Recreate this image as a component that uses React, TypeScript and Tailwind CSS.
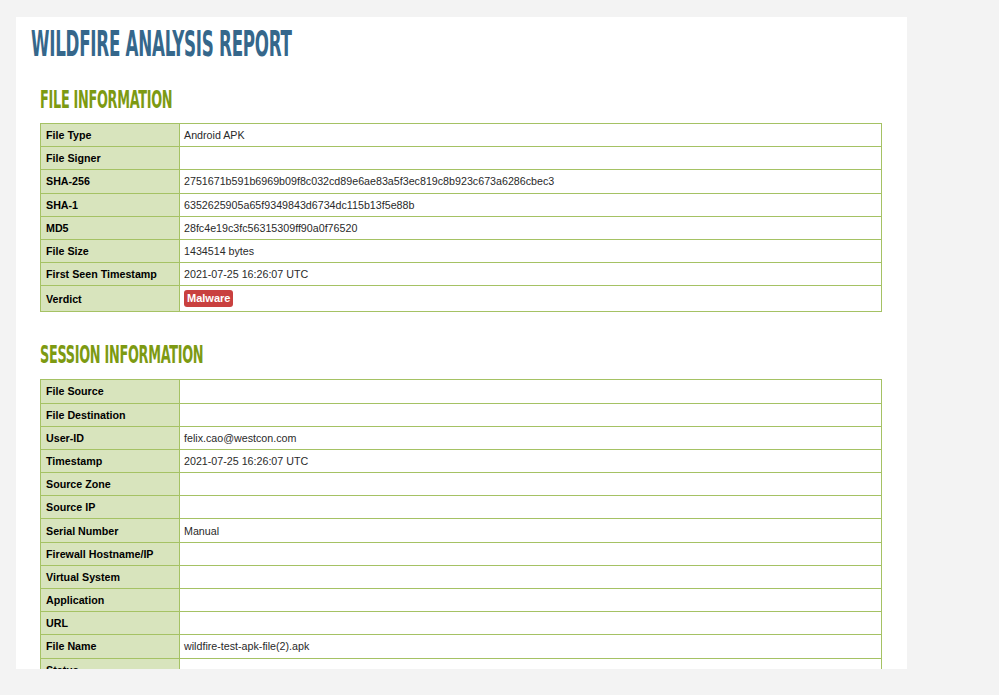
import React from 'react';

const FILE_INFO: [string, React.ReactNode][] = [
  ['File Type', 'Android APK'],
  ['File Signer', ''],
  ['SHA-256', '2751671b591b6969b09f8c032cd89e6ae83a5f3ec819c8b923c673a6286cbec3'],
  ['SHA-1', '6352625905a65f9349843d6734dc115b13f5e88b'],
  ['MD5', '28fc4e19c3fc56315309ff90a0f76520'],
  ['File Size', '1434514 bytes'],
  ['First Seen Timestamp', '2021-07-25 16:26:07 UTC'],
  [
    'Verdict',
    <span className="inline-block rounded-[3px] bg-[#c9403f] px-[3px] align-middle text-[11px] font-bold leading-[17px] text-white">Malware</span>,
  ],
];

const SESSION_INFO: [string, string][] = [
  ['File Source', ''],
  ['File Destination', ''],
  ['User-ID', 'felix.cao@westcon.com'],
  ['Timestamp', '2021-07-25 16:26:07 UTC'],
  ['Source Zone', ''],
  ['Source IP', ''],
  ['Serial Number', 'Manual'],
  ['Firewall Hostname/IP', ''],
  ['Virtual System', ''],
  ['Application', ''],
  ['URL', ''],
  ['File Name', 'wildfire-test-apk-file(2).apk'],
  ['Status', ''],
  ['Protocol', ''],
];

function InfoTable({ rows }: { rows: [string, React.ReactNode][] }) {
  return (
    <table className="w-[842px] border-collapse font-['Liberation_Sans',Arial,sans-serif] text-[10.7px] leading-[14px] text-[#2a2a2a]">
      <tbody>
        {rows.map(([k, v]) => (
          <tr key={k} className={k === 'Verdict' ? 'h-[26px]' : 'h-[23.2px]'}>
            <td className="w-[139px] border border-[#a5c264] bg-[#d8e4bd] px-[5px] py-0 font-bold text-black">{k}</td>
            <td className="border border-[#a5c264] bg-white px-[4px] py-0">{v}</td>
          </tr>
        ))}
      </tbody>
    </table>
  );
}

function Heading({ children, className }: { children: React.ReactNode; className: string }) {
  return (
    <h2
      className={`origin-left whitespace-nowrap font-['DejaVu_Sans_Condensed','DejaVu_Sans',sans-serif] font-bold uppercase leading-none tracking-[-0.5px] ${className}`}
    >
      {children}
    </h2>
  );
}

export default function App() {
  return (
    <div className="h-[695px] w-[999px] overflow-hidden bg-[#f3f3f3] pt-[17px] pl-4">
      <div className="h-[652px] w-[891px] overflow-hidden bg-white">
        <div className="pl-[15px] pt-[9px]">
          <Heading className="scale-x-[0.516] text-[36px] text-[#35678b]">Wildfire Analysis Report</Heading>
        </div>
        <div className="pl-[24px]">
          <Heading className="mt-[25px] scale-x-[0.571] text-[25px] text-[#7d9a12]">File Information</Heading>
          <div className="mt-[11px]">
            <InfoTable rows={FILE_INFO} />
          </div>
          <Heading className="mt-[30px] scale-x-[0.571] text-[25px] text-[#7d9a12]">Session Information</Heading>
          <div className="mt-[12px]">
            <InfoTable rows={SESSION_INFO} />
          </div>
        </div>
      </div>
    </div>
  );
}
